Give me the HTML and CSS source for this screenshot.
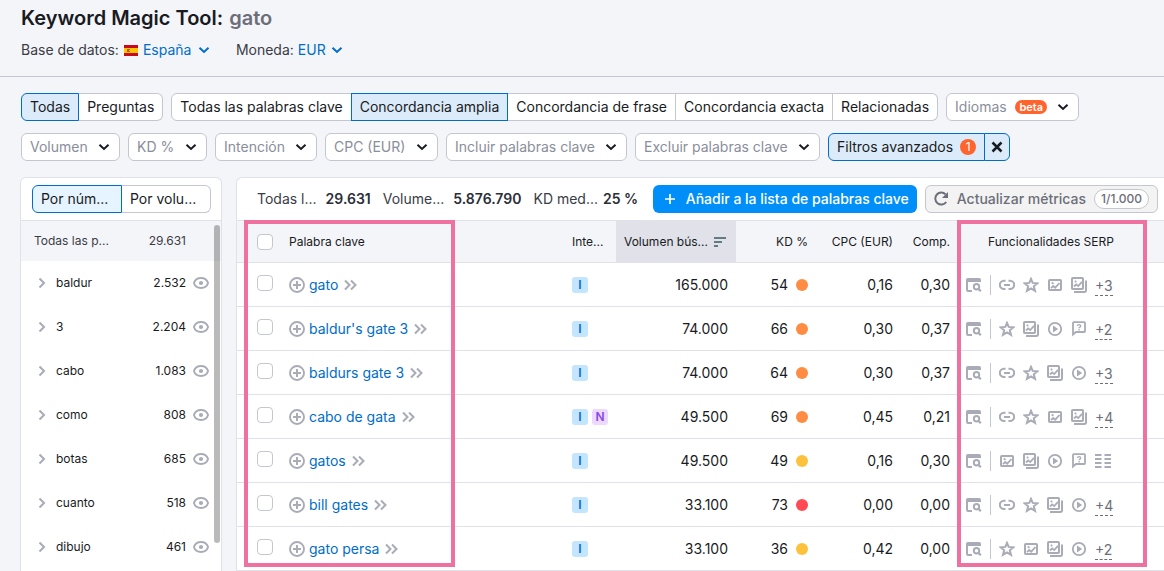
FILE: index.html
```html
<!DOCTYPE html>
<html lang="es">
<head>
<meta charset="utf-8">
<meta name="viewport" content="width=device-width, initial-scale=1">
<title>Keyword Magic Tool: gato</title>
<link rel="stylesheet" href="styles.css">
</head>
<body>
<svg class="sprite" aria-hidden="true">
  <symbol id="chevron" viewBox="0 0 12 12"><path d="M1.500 3.800 6 8l4.500-4.200" fill="none" stroke="currentColor" stroke-width="2"/></symbol>
  <symbol id="next" viewBox="0 0 8 12"><path d="M1.500 1.500 6 6l-4.500 4.500" fill="none" stroke="currentColor" stroke-width="2"/></symbol>
  <symbol id="double" viewBox="0 0 13 12"><path d="M1 1.500 5.500 6 1 10.500M7 1.500 11.500 6 7 10.500" fill="none" stroke="currentColor" stroke-width="2"/></symbol>
  <symbol id="eye" viewBox="0 0 16 16"><path d="M.9 8C2 4.600 4.700 3 8 3s6 1.600 7.100 5C14 11.400 11.300 13 8 13S2 11.400.9 8Z" fill="none" stroke="currentColor" stroke-width="1.900"/><circle cx="8" cy="8" r="2.100" fill="currentColor"/></symbol>
  <symbol id="add" viewBox="0 0 16 16"><circle cx="8" cy="8" r="7" fill="none" stroke="currentColor" stroke-width="1.900"/><path d="M8 4v8M4 8h8" stroke="currentColor" stroke-width="2"/></symbol>
  <symbol id="serp" viewBox="0 0 16 16"><path d="M1 3v9.800q0 1.200 1 1.200h4" fill="none" stroke="currentColor" stroke-width="2"/><path d="M0 5V3q0-2 1.800-2h11.400Q15 1 15 3v2Z" fill="currentColor"/><circle cx="10.500" cy="9.700" r="2.700" fill="none" stroke="currentColor" stroke-width="2"/><path d="m12.200 11.400 2.600 2.800" stroke="currentColor" stroke-width="2.200"/></symbol>
  <symbol id="link" viewBox="0 0 16 16"><path d="M6.500 3.700H5a4.100 4.100 0 0 0 0 8.300h1.500M9.500 3.700H11a4.100 4.100 0 0 1 0 8.300H9.500M5 7.900h6" fill="none" stroke="currentColor" stroke-width="2"/></symbol>
  <symbol id="star" viewBox="0 0 16 16"><path d="m8 1.900 1.700 4 4.700.4-3.600 3 1.200 4.500L8 11.400l-4 2.400 1.200-4.500-3.600-3 4.700-.4Z" fill="none" stroke="currentColor" stroke-width="2"/></symbol>
  <symbol id="image" viewBox="0 0 16 16"><rect x="2" y="3" width="12" height="10" rx=".8" fill="none" stroke="currentColor" stroke-width="2"/><path d="M4 11.200 6.200 9l2 1.700L12.500 6" fill="none" stroke="currentColor" stroke-width="1.800"/><circle cx="5.600" cy="6.200" r="1.100" fill="currentColor"/></symbol>
  <symbol id="images" viewBox="0 0 16 16"><rect x="1" y="1" width="11" height="11" rx=".8" fill="none" stroke="currentColor" stroke-width="2"/><path d="M3 9.500 5.200 7.400l2 1.700L11 4.800" fill="none" stroke="currentColor" stroke-width="1.800"/><circle cx="4.500" cy="4.500" r="1.100" fill="currentColor"/><path d="M15 3.500v9.800q0 1.700-1.700 1.700H3" fill="none" stroke="currentColor" stroke-width="2"/></symbol>
  <symbol id="play" viewBox="0 0 16 16"><circle cx="8" cy="8" r="6.200" fill="none" stroke="currentColor" stroke-width="1.800"/><path d="M6 4.600v6.800L11.200 8Z" fill="currentColor"/></symbol>
  <symbol id="question" viewBox="0 0 16 16"><path d="M2 13.500V2q0-.8.800-.8h10.400q.8 0 .8.800v8.200q0 .8-.8.800H5Z" fill="none" stroke="currentColor" stroke-width="1.800"/><path d="M6.400 5c0-1.900 3.300-1.800 3.300 0 0 1.200-1.600 1-1.600 2.200M8.100 8v1.400" fill="none" stroke="currentColor" stroke-width="1.300"/></symbol>
  <symbol id="columns" viewBox="0 0 16 16"><path d="M0 2h6.500M9.500 2H16M0 6h6.500M9.500 6H16M0 10h6.500M9.500 10H16M0 14h6.500M9.500 14H16" stroke="currentColor" stroke-width="2"/></symbol>
  <symbol id="plus" viewBox="0 0 10 10"><path d="M5 0v10M0 5h10" stroke="currentColor" stroke-width="1.700"/></symbol>
  <symbol id="cross" viewBox="0 0 12 12"><path d="m1.500 1.500 9 9m0-9-9 9" stroke="currentColor" stroke-width="2.500"/></symbol>
  <symbol id="refresh" viewBox="0 0 16 16"><path d="M12.600 3.400A6 6 0 1 0 13.200 11" fill="none" stroke="currentColor" stroke-width="2"/><path d="M15 1v6H9Z" fill="currentColor"/></symbol>
  <symbol id="sort" viewBox="0 0 12 10"><path d="M0 1h12M0 5h8M0 9h4" stroke="currentColor" stroke-width="1.800"/></symbol>
</svg>

<header class="page-header">
  <h1>Keyword Magic Tool: <span>gato</span></h1>
  <div class="meta">
    <div class="meta-item">
      <label for="db">Base de datos:</label>
      <svg class="flag" viewBox="0 0 14 11" aria-hidden="true"><path fill="#c60b1e" d="M0 0h14v11H0z"/><path fill="#ffc400" d="M0 3h14v5H0z"/><path d="M3 4h3v1H5v1h1v1H3z" fill="#b85b2b"/></svg>
      <span class="dropdown plain"><select id="db"><option>España</option></select><span class="adorn"><svg class="i12"><use href="#chevron"/></svg></span></span>
    </div>
    <div class="meta-item currency">
      <label for="cur">Moneda:</label>
      <span class="dropdown plain"><select id="cur"><option>EUR</option></select><span class="adorn"><svg class="i12"><use href="#chevron"/></svg></span></span>
    </div>
  </div>
</header>

<main>
  <div class="filters">
    <div class="filter-row">
      <div class="pills"><button class="active">Todas</button><button>Preguntas</button></div>
      <div class="pills"><button>Todas las palabras clave</button><button class="active">Concordancia amplia</button><button>Concordancia de frase</button><button>Concordancia exacta</button><button>Relacionadas</button></div>
      <span class="dropdown box languages"><select aria-label="Idiomas"><option>Idiomas</option></select><span class="adorn"><span class="beta">beta</span><svg class="i12"><use href="#chevron"/></svg></span></span>
    </div>
    <div class="filter-row">
      <span class="dropdown box"><select aria-label="Volumen"><option>Volumen</option></select><span class="adorn"><svg class="i12"><use href="#chevron"/></svg></span></span>
      <span class="dropdown box"><select aria-label="KD %"><option>KD %</option></select><span class="adorn"><svg class="i12"><use href="#chevron"/></svg></span></span>
      <span class="dropdown box"><select aria-label="Intención"><option>Intención</option></select><span class="adorn"><svg class="i12"><use href="#chevron"/></svg></span></span>
      <span class="dropdown box"><select aria-label="CPC (EUR)"><option>CPC (EUR)</option></select><span class="adorn"><svg class="i12"><use href="#chevron"/></svg></span></span>
      <span class="dropdown box"><select aria-label="Incluir palabras clave"><option>Incluir palabras clave</option></select><span class="adorn"><svg class="i12"><use href="#chevron"/></svg></span></span>
      <span class="dropdown box"><select aria-label="Excluir palabras clave"><option>Excluir palabras clave</option></select><span class="adorn"><svg class="i12"><use href="#chevron"/></svg></span></span>
      <div class="pills advanced"><button class="active">Filtros avanzados <span class="count">1</span></button><button class="active close" aria-label="Borrar filtros"><svg class="i12"><use href="#cross"/></svg></button></div>
    </div>
  </div>

  <div class="columns">
    <aside class="panel groups">
      <div class="groups-head"><div class="pills"><button class="active">Por núm...</button><button>Por volu...</button></div></div>
      <div class="group-all"><span>Todas las p...</span><span>29.631</span></div>
      <ul>
        <li><svg class="next"><use href="#next"/></svg><span class="name">baldur</span><span>2.532</span><svg class="i16"><use href="#eye"/></svg></li>
        <li><svg class="next"><use href="#next"/></svg><span class="name">3</span><span>2.204</span><svg class="i16"><use href="#eye"/></svg></li>
        <li><svg class="next"><use href="#next"/></svg><span class="name">cabo</span><span>1.083</span><svg class="i16"><use href="#eye"/></svg></li>
        <li><svg class="next"><use href="#next"/></svg><span class="name">como</span><span>808</span><svg class="i16"><use href="#eye"/></svg></li>
        <li><svg class="next"><use href="#next"/></svg><span class="name">botas</span><span>685</span><svg class="i16"><use href="#eye"/></svg></li>
        <li><svg class="next"><use href="#next"/></svg><span class="name">cuanto</span><span>518</span><svg class="i16"><use href="#eye"/></svg></li>
        <li><svg class="next"><use href="#next"/></svg><span class="name">dibujo</span><span>461</span><svg class="i16"><use href="#eye"/></svg></li>
      </ul>
      <div class="scrollbar"></div>
    </aside>

    <section class="panel results">
      <div class="toolbar">
        <div class="stats">
          <span class="stat"><span>Todas l...</span><b>29.631</b></span>
          <span class="stat"><span>Volume...</span><b>5.876.790</b></span>
          <span class="stat tight"><span>KD med...</span><b>25 %</b></span>
        </div>
        <div class="actions">
          <button class="primary"><svg class="i10"><use href="#plus"/></svg>Añadir a la lista de palabras clave</button>
          <button class="secondary"><svg class="i16"><use href="#refresh"/></svg>Actualizar métricas<span class="quota">1/1.000</span></button>
        </div>
      </div>
      <div class="table-wrap">
        <table>
          <colgroup><col class="c-check"><col><col class="c-intent"><col class="c-volume"><col class="c-kd"><col class="c-cpc"><col class="c-comp"><col class="c-serp"></colgroup>
          <thead><tr>
            <th class="check"><input type="checkbox" aria-label="Seleccionar todo"></th>
            <th class="word">Palabra clave</th><th>Inte...</th>
            <th class="sorted"><span class="sort">Volumen bús...<svg class="sort-icon"><use href="#sort"/></svg></span></th>
            <th class="num">KD %</th><th class="num">CPC (EUR)</th><th class="num">Comp.</th><th class="serp-head">Funcionalidades SERP</th>
          </tr></thead>
          <tbody>
            <tr><td class="check"><input type="checkbox" aria-label="gato"></td><td class="word"><span class="keyword"><svg class="i16"><use href="#add"/></svg><a href="#">gato</a><svg class="double"><use href="#double"/></svg></span></td><td><span class="intents"><span class="intent">I</span></span></td><td class="num">165.000</td><td class="num"><span class="kd">54<i class="dot"></i></span></td><td class="num">0,16</td><td class="num">0,30</td><td><span class="features"><svg class="i16"><use href="#serp"/></svg><span class="rule"></span><svg class="i16"><use href="#link"/></svg><svg class="i16"><use href="#star"/></svg><svg class="i16"><use href="#image"/></svg><svg class="i16"><use href="#images"/></svg><span class="more">+3</span></span></td></tr>
            <tr><td class="check"><input type="checkbox" aria-label="baldur's gate 3"></td><td class="word"><span class="keyword"><svg class="i16"><use href="#add"/></svg><a href="#">baldur's gate 3</a><svg class="double"><use href="#double"/></svg></span></td><td><span class="intents"><span class="intent">I</span></span></td><td class="num">74.000</td><td class="num"><span class="kd">66<i class="dot"></i></span></td><td class="num">0,30</td><td class="num">0,37</td><td><span class="features"><svg class="i16"><use href="#serp"/></svg><span class="rule"></span><svg class="i16"><use href="#star"/></svg><svg class="i16"><use href="#images"/></svg><svg class="i16"><use href="#play"/></svg><svg class="i16"><use href="#question"/></svg><span class="more">+2</span></span></td></tr>
            <tr><td class="check"><input type="checkbox" aria-label="baldurs gate 3"></td><td class="word"><span class="keyword"><svg class="i16"><use href="#add"/></svg><a href="#">baldurs gate 3</a><svg class="double"><use href="#double"/></svg></span></td><td><span class="intents"><span class="intent">I</span></span></td><td class="num">74.000</td><td class="num"><span class="kd">64<i class="dot"></i></span></td><td class="num">0,30</td><td class="num">0,37</td><td><span class="features"><svg class="i16"><use href="#serp"/></svg><span class="rule"></span><svg class="i16"><use href="#link"/></svg><svg class="i16"><use href="#star"/></svg><svg class="i16"><use href="#images"/></svg><svg class="i16"><use href="#play"/></svg><span class="more">+3</span></span></td></tr>
            <tr><td class="check"><input type="checkbox" aria-label="cabo de gata"></td><td class="word"><span class="keyword"><svg class="i16"><use href="#add"/></svg><a href="#">cabo de gata</a><svg class="double"><use href="#double"/></svg></span></td><td><span class="intents"><span class="intent">I</span><span class="intent nav">N</span></span></td><td class="num">49.500</td><td class="num"><span class="kd">69<i class="dot"></i></span></td><td class="num">0,45</td><td class="num">0,21</td><td><span class="features"><svg class="i16"><use href="#serp"/></svg><span class="rule"></span><svg class="i16"><use href="#link"/></svg><svg class="i16"><use href="#star"/></svg><svg class="i16"><use href="#image"/></svg><svg class="i16"><use href="#images"/></svg><span class="more">+4</span></span></td></tr>
            <tr><td class="check"><input type="checkbox" aria-label="gatos"></td><td class="word"><span class="keyword"><svg class="i16"><use href="#add"/></svg><a href="#">gatos</a><svg class="double"><use href="#double"/></svg></span></td><td><span class="intents"><span class="intent">I</span></span></td><td class="num">49.500</td><td class="num"><span class="kd">49<i class="dot medium"></i></span></td><td class="num">0,16</td><td class="num">0,30</td><td><span class="features"><svg class="i16"><use href="#serp"/></svg><span class="rule"></span><svg class="i16"><use href="#image"/></svg><svg class="i16"><use href="#images"/></svg><svg class="i16"><use href="#play"/></svg><svg class="i16"><use href="#question"/></svg><svg class="i16"><use href="#columns"/></svg></span></td></tr>
            <tr><td class="check"><input type="checkbox" aria-label="bill gates"></td><td class="word"><span class="keyword"><svg class="i16"><use href="#add"/></svg><a href="#">bill gates</a><svg class="double"><use href="#double"/></svg></span></td><td><span class="intents"><span class="intent">I</span></span></td><td class="num">33.100</td><td class="num"><span class="kd">73<i class="dot hard"></i></span></td><td class="num">0,00</td><td class="num">0,00</td><td><span class="features"><svg class="i16"><use href="#serp"/></svg><span class="rule"></span><svg class="i16"><use href="#link"/></svg><svg class="i16"><use href="#star"/></svg><svg class="i16"><use href="#images"/></svg><svg class="i16"><use href="#play"/></svg><span class="more">+4</span></span></td></tr>
            <tr><td class="check"><input type="checkbox" aria-label="gato persa"></td><td class="word"><span class="keyword"><svg class="i16"><use href="#add"/></svg><a href="#">gato persa</a><svg class="double"><use href="#double"/></svg></span></td><td><span class="intents"><span class="intent">I</span></span></td><td class="num">33.100</td><td class="num"><span class="kd">36<i class="dot medium"></i></span></td><td class="num">0,42</td><td class="num">0,00</td><td><span class="features"><svg class="i16"><use href="#serp"/></svg><span class="rule"></span><svg class="i16"><use href="#star"/></svg><svg class="i16"><use href="#image"/></svg><svg class="i16"><use href="#images"/></svg><svg class="i16"><use href="#play"/></svg><span class="more">+2</span></span></td></tr>
          </tbody>
        </table>
        <div class="highlight words"></div>
        <div class="highlight serps"></div>
      </div>
    </section>
  </div>
</main>
</body>
</html>
```
FILE: styles.css
```css
:root {
  --bg: #f4f5f9;
  --text: #191b23;
  --muted: #6c6e79;
  --placeholder: #8a8e9b;
  --line: #e0e1e9;
  --border: #c4c7cf;
  --icon: #a9abb6;
  --blue: #006dca;
  --blue-bg: #dcebf9;
  --pink: #ee71a0;
}
* { box-sizing: border-box; }
body {
  margin: 0;
  background: var(--bg);
  color: var(--text);
  font: 14px/20px Inter, "Liberation Sans", sans-serif;
}
button, select, input { font: inherit; color: inherit; margin: 0; }
svg { display: block; flex: none; }
.sprite { position: absolute; width: 0; height: 0; }
.i10 { width: 10px; height: 10px; }
.i12 { width: 12px; height: 12px; }
.i16 { width: 16px; height: 16px; }

.page-header {
  padding: 6px 21px 16px;
  border-bottom: 1px solid var(--border);
}
h1 { margin: 0 0 10px; font-size: 20px; line-height: 24px; font-weight: 600; }
h1 span { margin-left: 1px; color: var(--muted); }
.meta { display: flex; gap: 26px; color: #3a3c45; }
.meta-item { display: flex; align-items: center; gap: 5px; }
.currency { gap: 4px; }
.flag { width: 14px; height: 11px; }

.dropdown { display: inline-grid; align-items: center; }
.dropdown select {
  grid-area: 1 / 1;
  appearance: none;
  border: 0;
  padding: 0;
  background: none;
  cursor: pointer;
}
.adorn {
  grid-area: 1 / 1;
  justify-self: end;
  display: flex;
  align-items: center;
  gap: 10px;
  pointer-events: none;
}
.plain { color: var(--blue); }
.plain select { padding-right: 18px; }
.currency .plain select { padding-right: 17px; }
.box select {
  height: 28px;
  padding: 0 31px 0 8px;
  border: 1px solid var(--border);
  border-radius: 6px;
  background: #fff;
  color: var(--placeholder);
}
.box .adorn { padding-right: 10px; }
.languages select { padding-right: 71px; }
.beta {
  padding: 0 4px;
  border-radius: 8px;
  background: #ff642d;
  color: #fff;
  font-size: 11px;
  line-height: 14px;
  font-weight: 600;
}

main { padding: 16px 0 0 20px; }
.filters { display: grid; gap: 12px; padding-left: 1px; }
.filter-row { display: flex; gap: 8px; }
.pills { display: flex; }
.pills button {
  height: 28px;
  padding: 0 8px;
  border: 1px solid var(--border);
  border-left-width: 0;
  background: #fff;
  white-space: nowrap;
}
.pills button:first-child { border-left-width: 1px; border-radius: 6px 0 0 6px; }
.pills button:last-child { border-radius: 0 6px 6px 0; }
.pills button.active {
  border: 1px solid var(--blue);
  background: var(--blue-bg);
}
.pills button.active:not(:first-child) { margin-left: -1px; }
.advanced button { display: flex; align-items: center; gap: 7px; }
.pills .close { padding: 0 6px; }
.count {
  width: 16px;
  border-radius: 50%;
  background: #ff642d;
  color: #fff;
  font-size: 12px;
  line-height: 16px;
}

.columns {
  display: grid;
  grid-template-columns: 202px minmax(0, 1fr);
  gap: 14px;
  margin-top: 16px;
}
.panel { background: #fff; border: 1px solid var(--line); border-bottom: 0; }
.groups {
  position: relative;
  border-radius: 6px 6px 0 0;
  font-size: 12px;
}
.groups-head {
  padding: 7px 10px 7px 11px;
  border-bottom: 1px solid var(--line);
  font-size: 14px;
}
.groups-head button { flex: 1; text-align: left; }
.groups-head .pills button.active { background: #e5f4ff; }
.group-all {
  display: flex;
  justify-content: space-between;
  padding: 10px 35px 10px 13px;
  background: var(--bg);
  color: #3a3c45;
}
.groups ul { margin: 0; padding: 0; list-style: none; }
.groups li {
  display: flex;
  align-items: center;
  height: 44px;
  gap: 7px;
  padding: 0 12px 0 17px;
}
.groups li .name { flex: 1; padding-left: 3px; }
.groups li svg { color: var(--icon); }
.next { width: 8px; height: 12px; }
.scrollbar {
  position: absolute;
  top: 47px;
  right: 1px;
  width: 6px;
  height: 318px;
  border-radius: 3px;
  background: rgb(0 0 0 / 27%);
}

.results { border-right: 0; border-radius: 6px 0 0 0; min-width: 0; }
.toolbar {
  display: flex;
  align-items: center;
  justify-content: space-between;
  padding: 7px 6px 7px 20px;
  white-space: nowrap;
}
.stats { display: flex; gap: 12px; color: #3a3c45; }
.stat { display: flex; gap: 9px; }
.stat.tight { gap: 5px; }
.stat b { font-weight: 600; color: #2b2e38; }
.actions { display: flex; gap: 8px; }
.actions button {
  display: flex;
  align-items: center;
  height: 28px;
  border-radius: 6px;
  font-weight: 500;
}
.actions .primary {
  gap: 11px;
  padding: 0 8px 0 12px;
  border: 0;
  background: #008ff8;
  color: #fff;
}
.actions .secondary {
  gap: 8px;
  padding: 0 8px 0 7px;
  border: 1px solid var(--border);
  background: #f3f3f3;
  color: var(--muted);
}
.quota {
  padding: 0 6px;
  border: 1px solid var(--border);
  border-radius: 10px;
  background: #fff;
  font-size: 12px;
  line-height: 18px;
}

.table-wrap { position: relative; }
table { width: 100%; border-collapse: separate; border-spacing: 0; table-layout: fixed; }
.c-check { width: 52px; }
.c-intent { width: 52px; }
.c-volume { width: 120px; }
.c-kd { width: 80px; }
.c-cpc { width: 85px; }
.c-comp { width: 57px; }
.c-serp { width: 206px; }
th, td { padding: 0 8px; text-align: left; white-space: nowrap; border-bottom: 1px solid var(--line); }
th {
  height: 43px;
  border-top: 1px solid var(--line);
  background: var(--bg);
  font-size: 12px;
  font-weight: 400;
}
td { height: 44px; }
td:last-child { padding-right: 0; }
.check { padding: 0 0 0 20px; }
.word { padding-left: 0; }
.num { text-align: right; }
.sorted { background: #e0e1e9; }
.sort { display: flex; align-items: center; gap: 6px; }
.sort-icon { width: 12px; height: 10px; color: #647b83; }
.serp-head { padding-left: 30px; }
input[type="checkbox"] {
  display: block;
  width: 16px;
  height: 16px;
  appearance: none;
  border: 1px solid var(--border);
  border-radius: 4px;
  background: #fff;
}
td.check { padding-bottom: 3px; }
.keyword { display: flex; align-items: center; gap: 4px; color: var(--icon); }
.keyword a { color: var(--blue); text-decoration: none; }
.double { width: 13px; height: 12px; margin-left: 2px; }
.intents { display: flex; gap: 4px; }
.intent {
  width: 16px;
  border-radius: 3px;
  background: #c4e5fe;
  color: var(--blue);
  font-size: 12px;
  line-height: 16px;
  font-weight: 600;
  text-align: center;
}
.intent.nav { background: #edd9ff; color: #8649e1; }
.kd { display: flex; align-items: center; justify-content: flex-end; gap: 8px; }
.dot { width: 12px; height: 12px; border-radius: 50%; background: #ff8c43; }
.dot.medium { background: #fdc23c; }
.dot.hard { background: #ff4953; }
.features { display: flex; align-items: center; gap: 8px; color: var(--icon); }
.rule { width: 1px; height: 20px; background: var(--border); }
.more {
  padding-top: 3px;
  border-bottom: 1px dashed var(--muted);
  color: var(--muted);
  line-height: 18px;
}

.highlight {
  position: absolute;
  top: 0;
  bottom: 4px;
  border: 4px solid var(--pink);
  pointer-events: none;
}
.words { left: 7px; width: 211px; }
.serps { right: 17px; width: 190px; }
```
